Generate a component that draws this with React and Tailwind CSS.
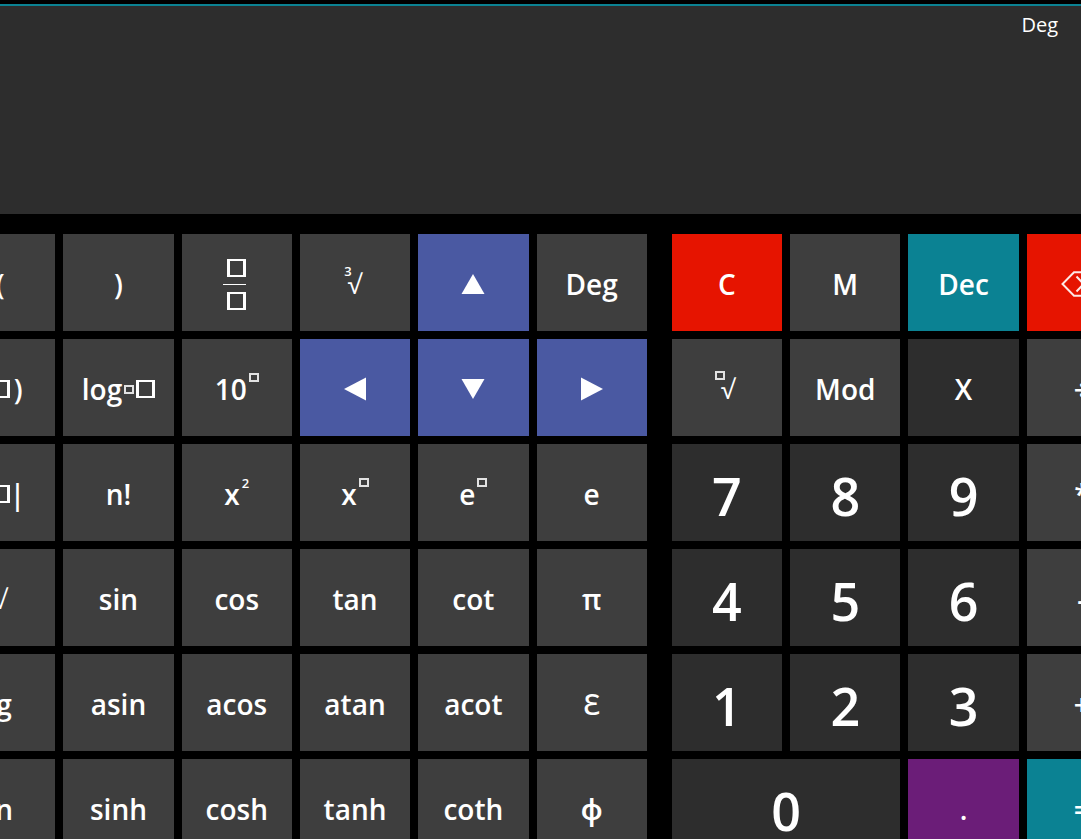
import React from 'react'
import clsx from 'clsx'

const tones = {
  base: 'bg-[#3e3e3e]',
  dark: 'bg-[#2d2d2d]',
  blue: 'bg-[#4a59a2]',
  red: 'bg-[#e61400]',
  teal: 'bg-[#0b8293]',
  purple: 'bg-[#6b1d78]',
}

function Box(){
  return <span className="block h-[18px] w-[19px] border-x-[3px] border-y-2 border-white" />
}

function SmallBox(){
  return <span className="block h-[9px] w-[10px] border-2 border-white/85" />
}

function Fraction(){
  return (
    <span className="flex flex-col items-end pr-1">
      <Box />
      <span className="my-[7px] h-px w-[23px] bg-white" />
      <Box />
    </span>
  )
}

function Power({ base, children }){
  return (
    <span className="flex items-start gap-0.5">
      <span>{base}</span>
      {children}
    </span>
  )
}

function Root({ children }){
  return (
    <span className="flex items-start pr-1">
      <span className="-mt-0.5 -mr-1">{children}</span>
      <span className="text-[26px] font-medium">√</span>
    </span>
  )
}

function Small({ children }){
  return <span className="block text-[13px] leading-[10px]">{children}</span>
}

function Arrow({ points, wide }){
  return (
    <svg className={wide ? 'h-5 w-6' : 'h-6 w-[22px]'} viewBox={wide ? '0 0 24 20' : '0 0 22 24'} fill="#fff">
      <polygon points={points} />
    </svg>
  )
}

function Backspace(){
  return (
    <svg className="h-[26px] w-[42px]" viewBox="0 0 42 26" fill="none" stroke="#fff" strokeOpacity="0.9" strokeWidth="2">
      <path d="M13 1.2H40.5V24.8H13L1.5 13Z" />
      <path d="M15.5 5.5L29.5 20.5M29.5 5.5L15.5 20.5" />
    </svg>
  )
}

const functionKeys = [
  { id: '(', label: '(' },
  { id: ')', label: ')' },
  { id: 'fraction', label: <Fraction /> },
  { id: 'cube root', label: <Root><Small>3</Small></Root> },
  { id: 'up', label: <Arrow wide points="12,0 23.5,20 0.5,20" />, tone: 'blue' },
  { id: 'Deg', label: 'Deg' },

  { id: 'brackets', label: <span className="flex items-center gap-1">(<Box />)</span> },
  { id: 'log base', label: <span className="flex items-center gap-0.5">log<SmallBox /><Box /></span> },
  { id: 'power of ten', label: <Power base="10"><SmallBox /></Power> },
  { id: 'left', label: <Arrow points="0,12 22,0.5 22,23.5" />, tone: 'blue' },
  { id: 'down', label: <Arrow wide points="12,20 23.5,0 0.5,0" />, tone: 'blue' },
  { id: 'right', label: <Arrow points="22,12 0,0.5 0,23.5" />, tone: 'blue' },

  { id: 'absolute value', label: <span className="flex items-center">|<Box />|</span> },
  { id: 'n!', label: 'n!' },
  { id: 'square', label: <Power base="x"><Small>2</Small></Power> },
  { id: 'power', label: <Power base="x"><SmallBox /></Power> },
  { id: 'power of e', label: <Power base="e"><SmallBox /></Power> },
  { id: 'e', label: 'e' },

  { id: 'square root', label: <span className="text-[26px] font-medium">√</span> },
  { id: 'sin', label: 'sin' },
  { id: 'cos', label: 'cos' },
  { id: 'tan', label: 'tan' },
  { id: 'cot', label: 'cot' },
  { id: 'pi', label: 'π' },

  { id: 'lg', label: 'lg' },
  { id: 'asin', label: 'asin' },
  { id: 'acos', label: 'acos' },
  { id: 'atan', label: 'atan' },
  { id: 'acot', label: 'acot' },
  { id: 'epsilon', label: <span className="font-medium">Ɛ</span> },

  { id: 'ln', label: 'ln' },
  { id: 'sinh', label: 'sinh' },
  { id: 'cosh', label: 'cosh' },
  { id: 'tanh', label: 'tanh' },
  { id: 'coth', label: 'coth' },
  { id: 'phi', label: 'ϕ' },
]

const numberKeys = [
  { id: 'C', label: 'C', tone: 'red' },
  { id: 'M', label: 'M' },
  { id: 'Dec', label: 'Dec', tone: 'teal' },
  { id: 'backspace', label: <Backspace />, tone: 'red' },

  { id: 'root', label: <Root><SmallBox /></Root> },
  { id: 'Mod', label: 'Mod' },
  { id: 'X', label: 'X', tone: 'dark' },
  { id: '÷', label: '÷' },

  { id: '7', label: '7', big: true },
  { id: '8', label: '8', big: true },
  { id: '9', label: '9', big: true },
  { id: '*', label: '*' },

  { id: '4', label: '4', big: true },
  { id: '5', label: '5', big: true },
  { id: '6', label: '6', big: true },
  { id: '-', label: '-' },

  { id: '1', label: '1', big: true },
  { id: '2', label: '2', big: true },
  { id: '3', label: '3', big: true },
  { id: '+', label: '+' },

  { id: '0', label: '0', big: true, wide: true },
  { id: '.', label: '.', tone: 'purple' },
  { id: '=', label: '=', tone: 'teal' },
]

function Key({ id, label, tone, big, wide }){
  return (
    <button
      type="button"
      aria-label={id}
      className={clsx(
        'flex h-[97px] items-center justify-center font-semibold text-white',
        big ? 'pt-1.5 text-[52px] leading-none' : 'pt-[3px] text-[28px] leading-8',
        wide && 'col-span-2',
        tones[tone || (big ? 'dark' : 'base')]
      )}
    >
      {label}
    </button>
  )
}

export default function App(){
  return (
    <div className="h-screen overflow-hidden bg-black pt-1 font-['Open_Sans','Noto_Sans',sans-serif] text-white">
      <header className="h-[210px] border-t-2 border-[#0b8293] bg-[#2d2d2d] px-[23px] pt-[5px] text-right text-[20px] leading-7">
        Deg
      </header>
      <main className="-mr-14 -ml-[55px] mt-5 grid grid-cols-[repeat(6,minmax(0,1fr))_9px_repeat(4,minmax(0,1fr))] gap-2">
        <section className="col-span-6 grid grid-cols-subgrid content-start gap-y-2">
          {functionKeys.map(key => <Key key={key.id} {...key} />)}
        </section>
        <section className="col-span-4 col-start-8 grid grid-cols-subgrid content-start gap-y-2">
          {numberKeys.map(key => <Key key={key.id} {...key} />)}
        </section>
      </main>
    </div>
  )
}
